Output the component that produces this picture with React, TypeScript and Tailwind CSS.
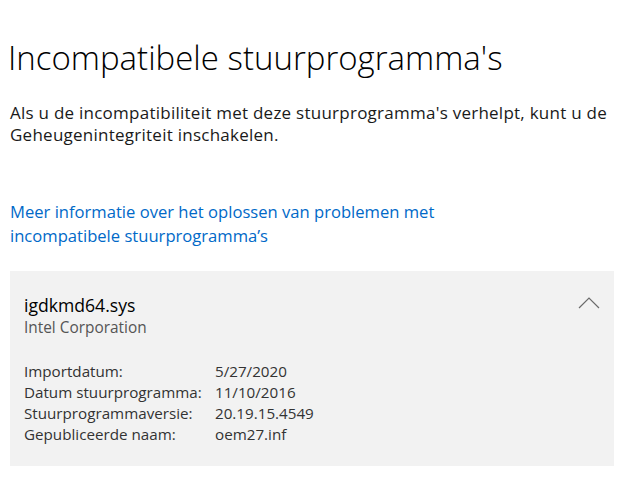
const details = [
  ["Importdatum:", "5/27/2020"],
  ["Datum stuurprogramma:", "11/10/2016"],
  ["Stuurprogrammaversie:", "20.19.15.4549"],
  ["Gepubliceerde naam:", "oem27.inf"],
];

export default function App() {
  return (
    <div className="min-h-screen bg-white font-['Open_Sans',sans-serif] text-black">
      <div className="pt-[36px] pl-[8px]">
        <h1 className="text-[33px] font-light leading-[44px] text-black">
          Incompatibele stuurprogramma's
        </h1>
      </div>

      <p className="mt-[22px] pl-[10px] pr-[1px] text-[17px] leading-[22px] tracking-[0.25px] text-[#1a1a1a]">
        Als u de incompatibiliteit met deze stuurprogramma's verhelpt, kunt u de Geheugenintegriteit inschakelen.
      </p>

      <a
        href="#"
        className="mt-[54px] block w-[460px] px-[10px] text-[16.6px] leading-[24px] text-[#0069c8]"
      >
        Meer informatie over het oplossen van problemen met incompatibele stuurprogramma’s
      </a>

      <div className="mx-[10px] mt-[23px] w-[604px] bg-[#f2f2f2] px-[14px] pt-[22px] pb-[21px]">
        <div className="flex items-start justify-between">
          <div>
            <div className="text-[17.6px] leading-[24px] text-black">igdkmd64.sys</div>
            <div className="text-[15.4px] leading-[22px] text-[#555]">Intel Corporation</div>
          </div>
          <svg width="22" height="12" viewBox="0 0 22 12" className="mt-[4px]">
            <path d="M1 11 L11 1 L21 11" fill="none" stroke="#6b6b6b" strokeWidth="1.2" />
          </svg>
        </div>

        <div className="mt-[22px] grid grid-cols-[191px_1fr] text-[15.2px] leading-[21px] text-[#333]">
          {details.map(([label, value]) => (
            <div key={label} className="contents">
              <span>{label}</span>
              <span>{value}</span>
            </div>
          ))}
        </div>
      </div>
    </div>
  );
}
